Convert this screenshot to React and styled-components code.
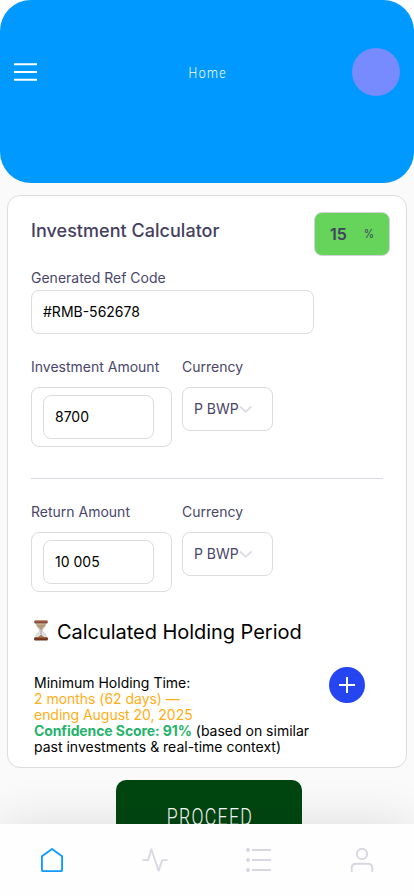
import React, { useState } from "react";
import styled, { createGlobalStyle } from "styled-components";

const GlobalStyle = createGlobalStyle`
  * {
    box-sizing: border-box;
  }
  body {
    margin: 0;
    background: #fff;
    font-family: "Inter", "Liberation Sans", sans-serif;
  }
  input, button {
    font-family: inherit;
  }
`;

function Hourglass() {
  return (
    <svg width="16" height="21" viewBox="0 0 16 21">
      <path d="M3 3H13C13 7.4 9.3 8.7 9.3 10.4S13.3 13.3 13.3 18H2.7C2.7 13.3 6.7 12.1 6.7 10.4S3 7.4 3 3Z" fill="#dfe3e8" stroke="#b7b9be" strokeWidth=".7" />
      <path d="M3.5 4.3H12.5C12.2 7 9.1 8 8.6 9.6H7.4C6.9 8 3.8 7 3.5 4.3Z" fill="#b79a70" />
      <path d="M7.7 9H8.4V15L12.6 18H3.4L7.7 15Z" fill="#a77d56" />
      <rect x="1.3" y=".5" width="13.4" height="3" rx="1" fill="#8b4a32" />
      <path d="M2 1H14" stroke="#b8795c" strokeWidth=".8" />
      <rect x="1.1" y="17.3" width="13.8" height="3.2" rx="1" fill="#71351f" />
      <path d="M2 17.7H14" stroke="#b06b48" strokeWidth=".8" />
    </svg>
  );
}

function Amount({ label, value, onChange }) {
  return (
    <AmountRow>
      <Field>
        <Label>{label}</Label>
        <AmountBox>
          <Input value={value} onChange={(e) => onChange(e.target.value)} />
        </AmountBox>
      </Field>
      <Field>
        <Label>Currency</Label>
        <Select>
          <span>P BWP</span>
          <svg width="14" height="14" viewBox="0 0 14 14" fill="none">
            <path d="M1 4.5L6.7 9.7L12.4 4.5" stroke="#dddee3" strokeWidth="1.9" />
          </svg>
        </Select>
      </Field>
    </AmountRow>
  );
}

function App() {
  const [amount, setAmount] = useState("8700");
  const [returns, setReturns] = useState("10 005");

  return (
    <Screen>
      <GlobalStyle />
      <Header>
        <MenuBtn>
          <svg width="24" height="20" viewBox="0 0 24 20">
            <path d="M0 2.3H23M0 10H23M0 17.7H23" stroke="#fff" strokeWidth="1.9" />
          </svg>
        </MenuBtn>
        <HeaderTitle>Home</HeaderTitle>
        <Avatar />
      </Header>
      <Card>
        <CardTop>
          <Title>Investment Calculator</Title>
          <Rate>
            <b>15</b>
            <span>%</span>
          </Rate>
        </CardTop>
        <Field>
          <Label $tight>Generated Ref Code</Label>
          <Input $wide defaultValue="#RMB-562678" />
        </Field>
        <Amount label="Investment Amount" value={amount} onChange={setAmount} />
        <Divider />
        <Amount label="Return Amount" value={returns} onChange={setReturns} />
        <Heading>
          <Hourglass />
          <span>Calculated Holding Period</span>
        </Heading>
        <Summary>
          <SummaryText>
            Minimum Holding Time:
            <br />
            <Period>
              2 months (62 days) —
              <br />
              ending August 20, 2025
            </Period>
            <br />
            <Score>Confidence Score: 91%</Score> (based on similar
            <br />
            past investments &amp; real-time context)
          </SummaryText>
          <AddBtn>
            <svg width="16" height="16" viewBox="0 0 16 16">
              <path d="M8 0V16M0 8H16" stroke="#fff" strokeWidth="2" />
            </svg>
          </AddBtn>
        </Summary>
      </Card>
      <ProceedBtn>
        <span>PROCEED</span>
      </ProceedBtn>
      <Nav>
        <NavBtn $active>
          <svg width="26" height="26" viewBox="0 0 26 26">
            <path d="M2.9 9.3L13 2L23.1 9.3V22.5Q23.1 24.1 21.5 24.1H4.5Q2.9 24.1 2.9 22.5Z" />
          </svg>
        </NavBtn>
        <NavBtn>
          <svg width="26" height="26" viewBox="0 0 26 26">
            <path d="M.3 13.1H6L9.4 2.2L16.6 23.8L20.2 13.1H25.7" />
          </svg>
        </NavBtn>
        <NavBtn>
          <svg width="26" height="26" viewBox="0 0 26 26">
            <path d="M6 3H25M6 13H25M6 23H25" />
            <g fill="currentColor" stroke="none">
              <circle cx="2" cy="3" r="2" />
              <circle cx="2" cy="13" r="2" />
              <circle cx="2" cy="23" r="2" />
            </g>
          </svg>
        </NavBtn>
        <NavBtn>
          <svg width="26" height="26" viewBox="0 0 26 26">
            <circle cx="13" cy="7" r="5.2" />
            <path d="M2.7 25V21.3Q2.7 16.8 7.2 16.8H18.8Q23.3 16.8 23.3 21.3V25" />
          </svg>
        </NavBtn>
      </Nav>
    </Screen>
  );
}

export default App;

const Screen = styled.div`
  width: 414px;
  height: 896px;
  display: flex;
  flex-direction: column;
  overflow: hidden;
  background: linear-gradient(#fff 90px, #fafafa 90px);
`;

const Header = styled.header`
  flex: none;
  height: 183px;
  padding: 48px 14px 0;
  display: grid;
  grid-template-columns: 48px 1fr 48px;
  align-items: start;
  background: #0099ff;
  border-radius: 31px;
`;

const MenuBtn = styled.button`
  height: 48px;
  padding: 0;
  display: flex;
  align-items: center;
  background: none;
  border: none;
`;

const HeaderTitle = styled.h1`
  margin: 0;
  font: 300 15.5px/50px Roboto, sans-serif;
  letter-spacing: 1.8px;
  text-indent: 2px;
  text-align: center;
  color: #fff;
  transform: scaleX(0.79);
`;

const Avatar = styled.div`
  width: 48px;
  height: 48px;
  border-radius: 50%;
  background: #778bff;
`;

const Card = styled.main`
  flex: none;
  height: 573px;
  margin: 12px 7px 0;
  padding: 16px 16px 0 23px;
  display: flex;
  flex-direction: column;
  background: #fff;
  border: 1px solid #dcdcdf;
  border-radius: 13px;
`;

const CardTop = styled.div`
  display: flex;
  justify-content: space-between;
`;

const Title = styled.h2`
  margin: 0;
  font-size: 18px;
  font-weight: 500;
  line-height: 38px;
  letter-spacing: 0.03px;
  color: #44405f;
`;

const Rate = styled.div`
  width: 76px;
  height: 44px;
  padding: 0 14px 0 15px;
  display: flex;
  align-items: center;
  justify-content: space-between;
  background: #66d45a;
  border: 1px solid #d2d2db;
  border-radius: 8px;
  color: #44405f;

  b {
    font-size: 16px;
    font-weight: 600;
  }
  span {
    padding-bottom: 2px;
    font-size: 12px;
    transform: scaleX(0.88);
  }
`;

const Field = styled.div`
  display: flex;
  flex-direction: column;
`;

const Label = styled.label`
  height: 20px;
  margin: ${(p) => (p.$tight ? "12px 0 2px" : "0 0 10px")};
  font-size: 14px;
  line-height: 20px;
  color: #49466a;
`;

const Input = styled.input`
  width: ${(p) => (p.$wide ? "283px" : "111px")};
  height: 44px;
  padding: 0 11px 2px;
  font-size: 14px;
  color: #000;
  background: #fff;
  border: 1px solid #dcdce0;
  border-radius: 8px;
  outline: none;
`;

const AmountRow = styled.div`
  display: flex;
  gap: 10px;
  margin-top: 23px;
`;

const AmountBox = styled.div`
  width: 141px;
  height: 60px;
  padding: 7px 11px;
  border: 1px solid #dcdce0;
  border-radius: 8px;
`;

const Select = styled.div`
  width: 91px;
  height: 44px;
  padding-left: 11px;
  display: flex;
  align-items: center;
  font-size: 14px;
  color: #49466a;
  border: 1px solid #dcdce0;
  border-radius: 8px;

  span {
    padding-bottom: 2px;
    letter-spacing: -0.05px;
  }
`;

const Divider = styled.hr`
  width: 352px;
  height: 1px;
  margin: 31px 0 0;
  background: #d9d9e2;
  border: none;
`;

const Heading = styled.h3`
  margin: 26px 0 0 2px;
  height: 28px;
  display: flex;
  align-items: center;
  gap: 8px;
  font-size: 20px;
  font-weight: 400;
  letter-spacing: -0.04px;
  color: #000;

  svg {
    margin-bottom: 4px;
  }
`;

const Summary = styled.div`
  display: flex;
  justify-content: space-between;
  align-items: flex-start;
  margin-top: 21px;
  padding: 0 25px 0 3px;
`;

const SummaryText = styled.p`
  margin: 8px 0 0;
  font-size: 14px;
  line-height: 16px;
  white-space: nowrap;
  color: #000;
`;

const Period = styled.span`
  letter-spacing: -0.03px;
  color: #ffae16;
`;

const Score = styled.b`
  font-weight: 700;
  letter-spacing: -0.1px;
  color: #27b36d;
`;

const AddBtn = styled.button`
  width: 36px;
  height: 36px;
  padding: 0;
  display: flex;
  align-items: center;
  justify-content: center;
  background: #2445f0;
  border: none;
  border-radius: 50%;
`;

const ProceedBtn = styled.button`
  flex: none;
  width: 186px;
  height: 76px;
  margin: 12px 0 -32px 116px;
  padding: 0;
  background: #004611;
  border: none;
  border-radius: 10px;
  color: #fff;

  span {
    display: inline-block;
    padding-left: 2px;
    font: 300 23px/74px Roboto, sans-serif;
    letter-spacing: 1.7px;
    transform: scaleX(0.77);
  }
`;

const Nav = styled.nav`
  flex: none;
  position: relative;
  height: 72px;
  display: flex;
  justify-content: space-around;
  background: #fefefe;
  box-shadow: 0 0 50px rgba(0, 0, 0, 0.12);
`;

const NavBtn = styled.button`
  width: 103px;
  height: 72px;
  padding: 0;
  display: flex;
  align-items: center;
  justify-content: center;
  background: none;
  border: none;
  color: ${(p) => (p.$active ? "#0f9bff" : "#d7d8e1")};

  svg {
    fill: none;
    stroke: currentColor;
    stroke-width: 1.9;
    stroke-linejoin: round;
  }
`;
